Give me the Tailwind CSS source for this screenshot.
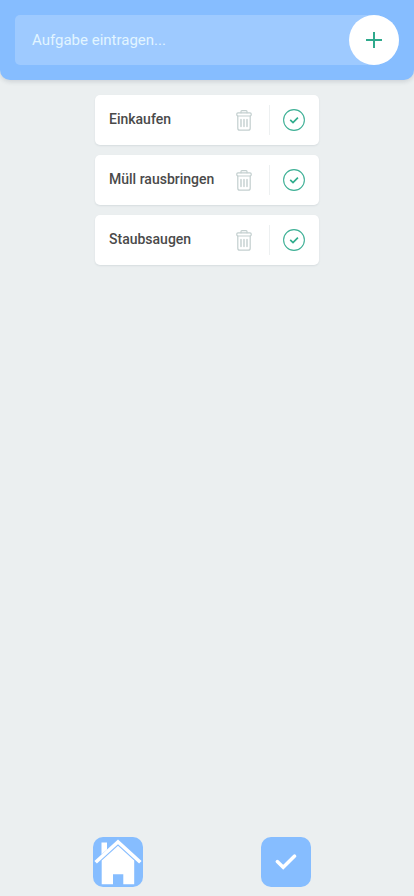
<!DOCTYPE html>
<html lang="de">
<head>
<meta charset="utf-8">
<meta name="viewport" content="width=device-width, initial-scale=1">
<title>Aufgaben</title>
<script src="https://cdn.jsdelivr.net/npm/@tailwindcss/browser@4"></script>
</head>
<body class="bg-[#ebeff0] font-[Roboto,sans-serif]">
<svg class="hidden">
  <symbol id="trash" viewBox="0 0 16 21">
    <g fill="none" stroke="#c3cfcf" stroke-width="1.2" stroke-linejoin="round" stroke-linecap="round">
      <path d="M5 2.8V1.6Q5 .7 5.9 .7h4.2Q11 .7 11 1.6v1.2"/>
      <rect x=".8" y="2.8" width="14.4" height="3.2" rx="1.2"/>
      <path d="M1.8 6V18.2Q1.8 20.2 3.8 20.2h8.4q2 0 2-2V6"/>
      <path d="M5 9.4v7.2M8 9.4v7.2M11 9.4v7.2" stroke-width="1.4"/>
    </g>
  </symbol>
  <symbol id="done" viewBox="0 0 22 22">
    <circle cx="11" cy="11" r="10.4" fill="none" stroke="#3fb096" stroke-width="1.1"/>
    <path d="M7.2 10.9 10 13.5 14.9 8.6" fill="none" stroke="#2fac8c" stroke-width="1.7"/>
  </symbol>
</svg>
<div class="flex h-[896px] w-[414px] flex-col overflow-hidden">
  <header class="h-20 rounded-b-[10px] bg-[#86bdff] p-[15px] shadow-[0_2px_4px_rgba(44,62,80,0.15)]">
    <div class="flex h-[50px] items-center justify-between rounded-l-[5px] rounded-r-[25px] bg-white/20">
      <span class="pl-[17px] text-[15px] leading-[18px] text-[#e2f5ff]">Aufgabe eintragen...</span>
      <button class="flex size-[50px] items-center justify-center rounded-full bg-white">
        <svg class="size-4" viewBox="0 0 16 16"><path d="M8 0v16M0 8h16" stroke="#2fa98c" stroke-width="2"/></svg>
      </button>
    </div>
  </header>
  <ul class="mx-auto mt-[15px] flex w-[224px] flex-col gap-2.5 text-[14px] font-medium text-[#4a4a4a]">
    <li class="flex h-[50px] items-center rounded-[5px] bg-white pl-3.5 shadow-[0_1px_2px_rgba(44,62,80,0.1)]">
      <span class="flex-1 whitespace-nowrap pb-0.5">Einkaufen</span>
      <svg class="mr-[17px] h-[21px] w-4"><use href="#trash"/></svg>
      <i class="h-[30px] w-px bg-[#edf0f1]"></i>
      <svg class="mx-[13px] mr-3.5 size-[22px]"><use href="#done"/></svg>
    </li>
    <li class="flex h-[50px] items-center rounded-[5px] bg-white pl-3.5 shadow-[0_1px_2px_rgba(44,62,80,0.1)]">
      <span class="flex-1 whitespace-nowrap pb-0.5">Müll rausbringen</span>
      <svg class="mr-[17px] h-[21px] w-4"><use href="#trash"/></svg>
      <i class="h-[30px] w-px bg-[#edf0f1]"></i>
      <svg class="mx-[13px] mr-3.5 size-[22px]"><use href="#done"/></svg>
    </li>
    <li class="flex h-[50px] items-center rounded-[5px] bg-white pl-3.5 shadow-[0_1px_2px_rgba(44,62,80,0.1)]">
      <span class="flex-1 whitespace-nowrap pb-0.5">Staubsaugen</span>
      <svg class="mr-[17px] h-[21px] w-4"><use href="#trash"/></svg>
      <i class="h-[30px] w-px bg-[#edf0f1]"></i>
      <svg class="mx-[13px] mr-3.5 size-[22px]"><use href="#done"/></svg>
    </li>
  </ul>
  <nav class="mt-auto mb-[9px] flex gap-[118px] pl-[93px]">
    <button class="size-[50px] rounded-[10px] bg-[#86bdff]">
      <svg class="size-[50px]" viewBox="0 0 50 50" fill="#fff">
        <path d="M8.5 5.5H14V12.5L8.5 17.6Z"/>
        <path d="M25 2.6 48.6 24 46.1 26.6 25 7.3 3.9 26.6 1.4 24Z"/>
        <path d="M25 8.7 41.2 23.4V47.3H30.3V37.2H20V47.3H8.7V23.4Z"/>
      </svg>
    </button>
    <button class="size-[50px] rounded-[10px] bg-[#86bdff]">
      <svg class="size-[50px]" viewBox="0 0 50 50" fill="none" stroke="#fff" stroke-width="3.5"><path stroke-linecap="round" d="M16.3 24.6 22.2 30.2 33.6 19.1"/></svg>
    </button>
  </nav>
</div>
</body>
</html>
